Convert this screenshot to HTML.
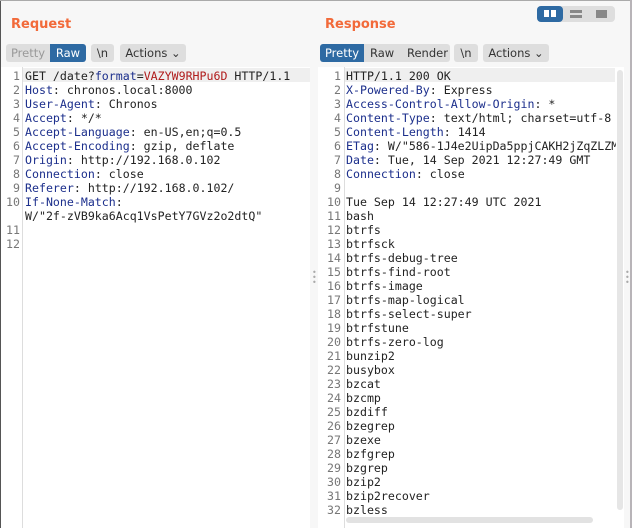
<!DOCTYPE html><html><head><style>
body{margin:0;width:632px;height:528px;background:#f7f7f7;position:relative;overflow:hidden;font-family:"DejaVu Sans","Liberation Sans",sans-serif}
.t{position:absolute;top:17px;font-size:13px;font-weight:bold;color:#f26a3a}
.btn{position:absolute;top:44px;height:18px;line-height:18px;font-size:11.5px;color:#333;background:#dedede;border-radius:3px;text-align:center}
.on{background:#2e6aa3;color:#fff}
.ed{position:absolute;top:67px;bottom:0;background:#fff}
.ln{position:absolute;font-family:"DejaVu Sans Mono",monospace;font-size:11.6px;line-height:14px;color:#777;text-align:right}
.code{position:absolute;font-family:"DejaVu Sans Mono",monospace;font-size:11.6px;line-height:14px;color:#222;white-space:pre}
.k{color:#1c2f8c}.r{color:#b01c1c}
</style></head><body>
<div style="position:absolute;left:0;top:0;width:1px;height:528px;background:#555"></div>
<div style="position:absolute;left:0;top:0;width:632px;height:1px;background:#aaa"></div>
<div style="position:absolute;right:0;top:0;width:2px;height:528px;background:#b8b4b8"></div>
<div class="t" style="left:11px">Request</div>
<div class="t" style="left:325px">Response</div>
<div style="position:absolute;left:537px;top:6px;width:78px;height:16px;background:#dedede;border-radius:4px"></div>
<div style="position:absolute;left:537px;top:6px;width:26px;height:16px;background:#2e6aa3;border-radius:4px"></div>
<div style="position:absolute;left:544px;top:10px;width:5px;height:7px;background:#fff"></div><div style="position:absolute;left:551px;top:10px;width:5px;height:7px;background:#fff"></div>
<div style="position:absolute;left:570px;top:10px;width:12px;height:3px;background:#888"></div><div style="position:absolute;left:570px;top:15px;width:12px;height:3px;background:#888"></div>
<div style="position:absolute;left:596px;top:10px;width:11px;height:8px;background:#888"></div>
<div class="btn" style="left:6px;width:44px;color:#999;border-radius:3px 0 0 3px">Pretty</div>
<div class="btn on" style="left:50px;width:36px;border-radius:0 3px 3px 0">Raw</div>
<div class="btn" style="left:91px;width:23px">\n</div>
<div class="btn" style="left:120px;width:66px">Actions &#8964;</div>
<div class="btn on" style="left:320px;width:44px;border-radius:3px 0 0 3px">Pretty</div>
<div class="btn" style="left:364px;width:86px;border-radius:0 3px 3px 0"><span style="position:absolute;left:6px">Raw</span><span style="position:absolute;left:43px">Render</span></div>
<div class="btn" style="left:454px;width:24px">\n</div>
<div class="btn" style="left:483px;width:66px">Actions &#8964;</div>
<div class="ed" style="left:1px;width:309px"></div>
<div class="ed" style="left:318px;width:306px"></div>
<div style="position:absolute;left:23px;top:68px;width:287px;height:14px;background:#efefef"></div>
<div style="position:absolute;left:345px;top:68px;width:270px;height:14px;background:#efefef"></div>
<div style="position:absolute;left:22px;top:67px;width:1px;height:461px;background:#ddd"></div>
<div style="position:absolute;left:344px;top:67px;width:1px;height:461px;background:#ddd"></div>
<div style="position:absolute;left:617px;top:70px;width:6px;height:440px;background:#e6e6e6;border-radius:3px"></div>
<div style="position:absolute;left:346px;top:517px;width:247px;height:6px;background:#e2e2e2;border-radius:3px"></div>
<div style="position:absolute;left:312px;top:270px;color:#aaa;font-size:8px;line-height:5px">&#8226;<br>&#8226;<br>&#8226;</div>
<div style="position:absolute;left:625px;top:270px;color:#aaa;font-size:8px;line-height:5px">&#8226;<br>&#8226;<br>&#8226;</div>
<div class="ln" style="left:0;top:69px;width:20px">1<br>2<br>3<br>4<br>5<br>6<br>7<br>8<br>9<br>10<br><br>11<br>12</div>
<div class="code" style="left:25px;top:69px">GET /date?<span class="k">format</span>=<span class="r">VAZYW9RHPu6D</span> HTTP/1.1
<span class="k">Host</span>: chronos.local:8000
<span class="k">User-Agent</span>: Chronos
<span class="k">Accept</span>: */*
<span class="k">Accept-Language</span>: en-US,en;q=0.5
<span class="k">Accept-Encoding</span>: gzip, deflate
<span class="k">Origin</span>: http://192.168.0.102
<span class="k">Connection</span>: close
<span class="k">Referer</span>: http://192.168.0.102/
<span class="k">If-None-Match</span>:
W/"2f-zVB9ka6Acq1VsPetY7GVz2o2dtQ"</div>
<div class="ln" style="left:318px;top:69px;width:23px">1<br>2<br>3<br>4<br>5<br>6<br>7<br>8<br>9<br>10<br>11<br>12<br>13<br>14<br>15<br>16<br>17<br>18<br>19<br>20<br>21<br>22<br>23<br>24<br>25<br>26<br>27<br>28<br>29<br>30<br>31<br>32</div>
<div style="position:absolute;left:346px;top:69px;width:270px;height:447px;overflow:hidden"><div class="code" style="left:0;top:0">HTTP/1.1 200 OK
<span class="k">X-Powered-By</span>: Express
<span class="k">Access-Control-Allow-Origin</span>: *
<span class="k">Content-Type</span>: text/html; charset=utf-8
<span class="k">Content-Length</span>: 1414
<span class="k">ETag</span>: W/"586-1J4e2UipDa5ppjCAKH2jZqZLZM"
<span class="k">Date</span>: Tue, 14 Sep 2021 12:27:49 GMT
<span class="k">Connection</span>: close

Tue Sep 14 12:27:49 UTC 2021
bash
btrfs
btrfsck
btrfs-debug-tree
btrfs-find-root
btrfs-image
btrfs-map-logical
btrfs-select-super
btrfstune
btrfs-zero-log
bunzip2
busybox
bzcat
bzcmp
bzdiff
bzegrep
bzexe
bzfgrep
bzgrep
bzip2
bzip2recover
bzless</div></div>
</body></html>
